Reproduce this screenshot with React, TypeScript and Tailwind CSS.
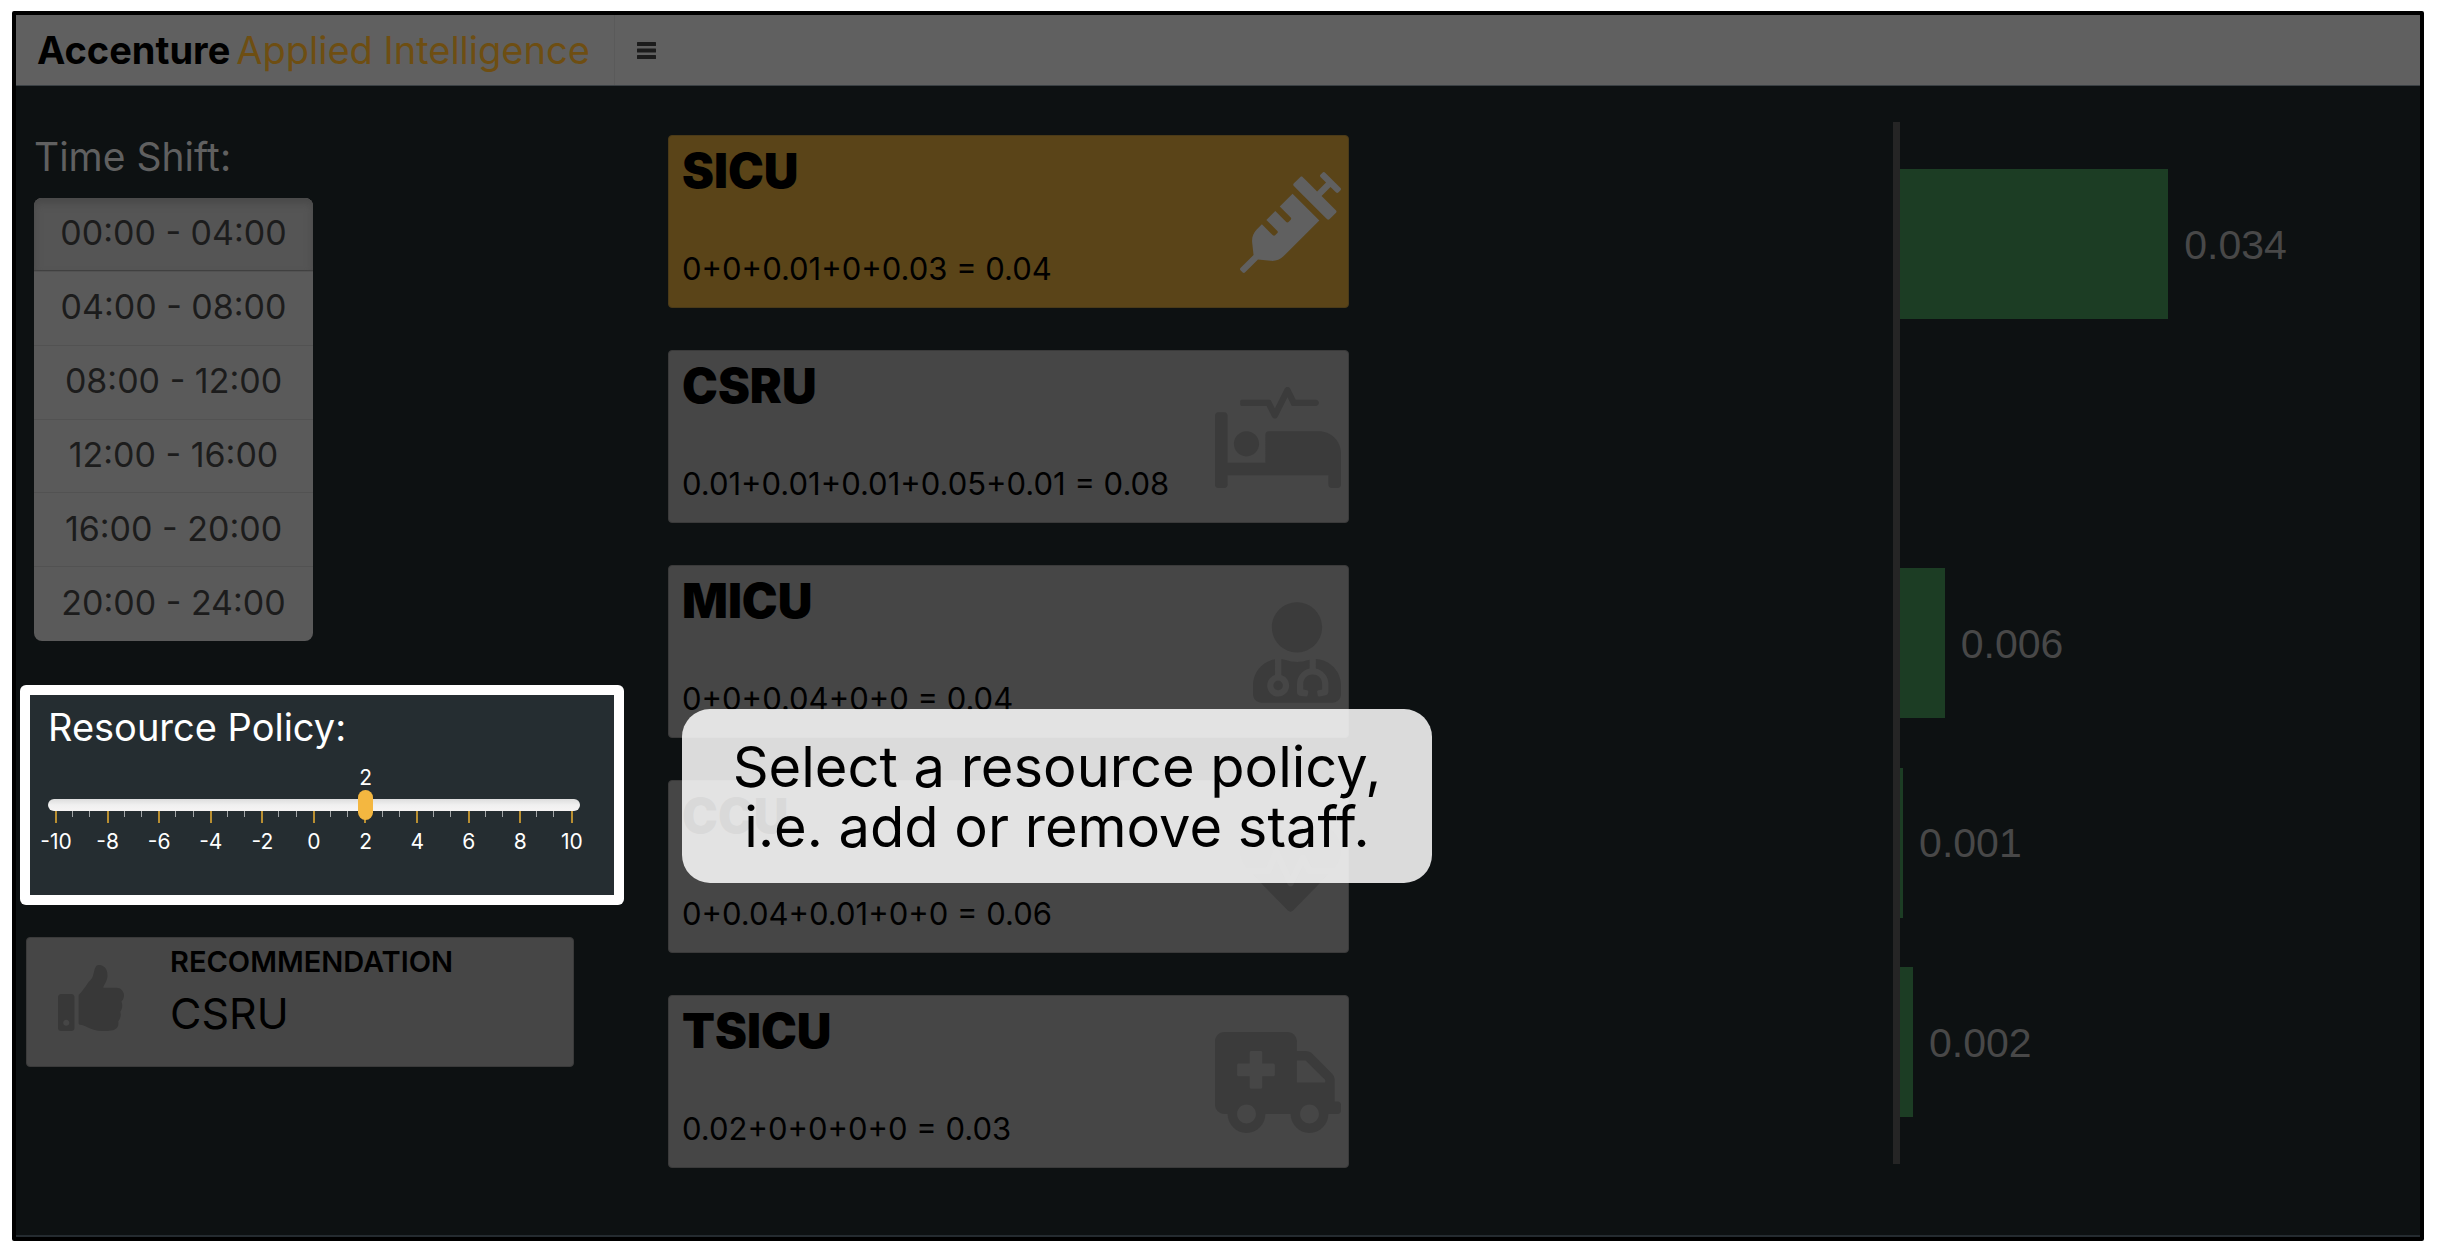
import { useState } from "react";
import type { IconType } from "react-icons";
import {
  FaAmbulance,
  FaHeartbeat,
  FaProcedures,
  FaSyringe,
  FaThumbsUp,
  FaUserMd,
} from "react-icons/fa";

const shifts = [
  "00:00 - 04:00",
  "04:00 - 08:00",
  "08:00 - 12:00",
  "12:00 - 16:00",
  "16:00 - 20:00",
  "20:00 - 24:00",
];

const units: { name: string; formula: string; icon: IconType; iconClass: string }[] = [
  { name: "SICU", formula: "0+0+0.01+0+0.03 = 0.04", icon: FaSyringe, iconClass: "mt-[25px] h-[101px] w-[101px] text-[#606060]" },
  { name: "CSRU", formula: "0.01+0.01+0.01+0.05+0.01 = 0.08", icon: FaProcedures, iconClass: "mt-[25px] h-[101px] w-[126px] text-[#3b3b3b]" },
  { name: "MICU", formula: "0+0+0.04+0+0 = 0.04", icon: FaUserMd, iconClass: "mt-[25px] h-[101px] w-[88px] text-[#3b3b3b]" },
  { name: "CCU", formula: "0+0.04+0.01+0+0 = 0.06", icon: FaHeartbeat, iconClass: "mt-[25px] h-[101px] w-[101px] text-[#3b3b3b]" },
  { name: "TSICU", formula: "0.02+0+0+0+0 = 0.03", icon: FaAmbulance, iconClass: "mt-[25px] h-[101px] w-[126px] text-[#3b3b3b]" },
];

// share: bar length as a percentage of the plot width
const bars = [
  { unit: "SICU", label: "0.034", share: 51.6 },
  { unit: "CSRU", label: "", share: 0 },
  { unit: "MICU", label: "0.006", share: 8.6 },
  { unit: "CCU", label: "0.001", share: 0.6 },
  { unit: "TSICU", label: "0.002", share: 2.5 },
];

const scale = [-10, -8, -6, -4, -2, 0, 2, 4, 6, 8, 10];
const ticks = Array.from({ length: 31 }, (_, i) => i);

function Header() {
  return (
    <header className="flex h-[71px] items-stretch border-b border-[#3a4044] bg-[#606060]">
      <a href="#" className="flex items-center gap-1.5 pr-6 pl-[21px] text-[38px] leading-10">
        <span className="font-bold text-black">Accenture</span>
        <span className="text-[#6e4e12]">Applied Intelligence</span>
      </a>
      <button type="button" aria-label="Toggle sidebar" className="border-l border-[#5a5a5a] px-[22px] text-[#1c1c1c]">
        <svg viewBox="0 0 19 17" className="h-[17px] w-[19px]" fill="currentColor" aria-hidden="true">
          <rect width="19" height="4" rx="0.5" />
          <rect y="6.5" width="19" height="4" rx="0.5" />
          <rect y="13" width="19" height="4" rx="0.5" />
        </svg>
      </button>
    </header>
  );
}

function TimeShift() {
  const [active, setActive] = useState(0);
  return (
    <section className="pl-[18px]">
      <h2 id="shift" className="text-[39px] leading-10 text-[#606060]">Time Shift:</h2>
      <div
        role="group"
        aria-labelledby="shift"
        className="mt-[21px] grid h-[443px] w-[279px] auto-rows-fr divide-y divide-[#525252] overflow-hidden rounded-lg bg-[#5a5a5a]"
      >
        {shifts.map((s, i) => (
          <button
            key={s}
            type="button"
            aria-pressed={i === active}
            onClick={() => setActive(i)}
            className={
              i === active
                ? "bg-[#555555] pb-0.5 text-[34px] leading-10 text-[#1c1c1c] shadow-[inset_0_5px_8px_#484848,inset_0_-1px_0_#404040]"
                : "pb-0.5 text-[34px] leading-10 text-[#1c1c1c]"
            }
          >
            {s}
          </button>
        ))}
      </div>
    </section>
  );
}

function ResourcePolicy() {
  const [value, setValue] = useState(2);
  return (
    <section className="mt-11 ml-1 w-[604px] rounded-md bg-white p-2.5">
      <div className="h-[200px] bg-[#252d31] pt-3 pr-[34px] pl-[18px] text-white">
        <label htmlFor="policy" className="block text-[38px] leading-10">Resource Policy:</label>
        <div className="mt-[19px] px-2">
          <div className="relative h-6">
            <output
              htmlFor="policy"
              className="absolute flex w-0 justify-center text-[21px] leading-6"
              style={{ left: `${((value + 10) / 20) * 100}%` }}
            >
              {value}
            </output>
          </div>
        </div>
        <input
          id="policy"
          type="range"
          min={-10}
          max={10}
          value={value}
          onChange={(e) => setValue(Number(e.target.value))}
          className="relative z-10 block h-[30px] w-full appearance-none bg-transparent [&::-webkit-slider-runnable-track]:h-3 [&::-webkit-slider-runnable-track]:rounded-full [&::-webkit-slider-runnable-track]:bg-linear-to-b [&::-webkit-slider-runnable-track]:from-[#dddddd] [&::-webkit-slider-runnable-track]:via-[#f0f0f0] [&::-webkit-slider-runnable-track]:to-[#f6f4f4] [&::-webkit-slider-thumb]:-mt-[9px] [&::-webkit-slider-thumb]:h-[30px] [&::-webkit-slider-thumb]:w-[15px] [&::-webkit-slider-thumb]:appearance-none [&::-webkit-slider-thumb]:rounded-full [&::-webkit-slider-thumb]:bg-[#f4b740]"
        />
        <div aria-hidden="true" className="-mt-[9px] flex justify-between px-[7px]">
          {ticks.map((t) => (
            <span key={t} className={t % 3 === 0 ? "h-3 w-0.5 bg-[#b98f31]" : "mr-px h-1.5 w-px bg-[#a3a6a8]"} />
          ))}
        </div>
        <div aria-hidden="true" className="mt-[7px] flex justify-between px-2 text-[21px] leading-6">
          {scale.map((n) => (
            <span key={n} className="flex w-0 justify-center">{n}</span>
          ))}
        </div>
      </div>
    </section>
  );
}

function Recommendation() {
  return (
    <section className="mt-8 ml-2.5 flex h-[130px] w-[548px] rounded-sm border border-[#3a3a3a] bg-[#464646] pl-[31px] text-black">
      <FaThumbsUp className="mt-[27px] size-[66px] text-[#383838]" />
      <div className="ml-[46px] pt-2">
        <h3 className="text-[29px] leading-8 font-semibold">RECOMMENDATION</h3>
        <p className="mt-2 text-[43px] leading-[54px]">CSRU</p>
      </div>
    </section>
  );
}

function UnitCards() {
  return (
    <div className="flex flex-col gap-[42px] pt-[49px]">
      {units.map(({ name, formula, icon: Icon, iconClass }, i) => (
        <article
          key={name}
          className={
            i === 0
              ? "flex h-[173px] justify-between rounded-sm border border-[#4a3a18] bg-[#5a4418] pt-[11px] pr-[7px] pl-[13px]"
              : "flex h-[173px] justify-between rounded-sm border border-[#3a3a3a] bg-[#464646] pt-[11px] pr-[7px] pl-[13px]"
          }
        >
          <div className="text-black">
            <h3 className="text-[48px] leading-12 font-black">{name}</h3>
            <p className="mt-[54px] text-[31px] leading-10">{formula}</p>
          </div>
          <Icon className={iconClass} />
        </article>
      ))}
    </div>
  );
}

function GainChart() {
  return (
    <div className="col-start-4 pt-9">
      <ul className="flex h-[1042px] flex-col justify-between border-l-[7px] border-[#252525] py-[47px]">
        {bars.map((b) => (
          <li key={b.unit} className="flex h-[150px] items-center">
            <div className="h-full shrink-0 bg-[#1c3d24]" style={{ width: `${b.share}%` }} />
            <span className="ml-4 pt-px font-['Liberation_Sans',sans-serif] text-[41px] leading-12 text-[#484848]">{b.label}</span>
          </li>
        ))}
      </ul>
    </div>
  );
}

export default function App() {
  return (
    <div className="flex min-h-screen flex-col bg-white pt-[11px] pr-4 pb-[13px] pl-3 font-['Inter',sans-serif]">
      <div className="flex flex-1 flex-col rounded-xs border-4 border-black bg-[#0d1112]">
        <Header />
        <main className="relative grid flex-1 grid-cols-[652fr_681fr_544fr_527fr] border-b-2 border-[#242b30]">
          <div className="pt-[51px]">
            <TimeShift />
            <ResourcePolicy />
            <Recommendation />
          </div>
          <UnitCards />
          <GainChart />
          <div
            role="tooltip"
            className="absolute top-[623px] left-[666px] w-[750px] rounded-[28px] bg-white/85 pt-7 pb-[26px] text-center text-[56px] leading-[60px] text-black"
          >
            Select a resource policy,
            <br />
            i.e. add or remove staff.
          </div>
        </main>
      </div>
    </div>
  );
}
